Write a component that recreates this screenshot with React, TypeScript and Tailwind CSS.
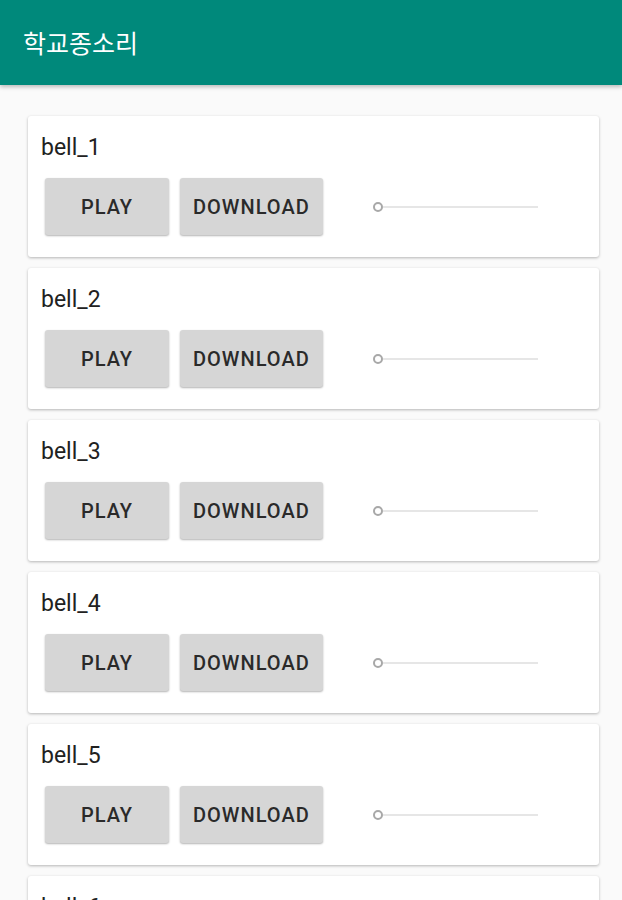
import React from 'react';

const bells = ['bell_1', 'bell_2', 'bell_3', 'bell_4', 'bell_5', 'bell_6'];

const BellCard: React.FC<{ name: string }> = ({ name }) => {
  return (
    <div className="bg-white rounded-[3px] shadow-[0_1px_3px_rgba(0,0,0,0.28)] h-[141px] shrink-0 pl-[13px] pt-[17px]">
      <div className="text-[23px] leading-[30px] text-[#212121]">{name}</div>
      <div className="flex items-center mt-[15px]">
        <button className="w-[124px] h-[57px] bg-[#d6d6d6] rounded-[3px] shadow-[0_1px_2px_rgba(0,0,0,0.3)] ml-[4px] text-[20px] font-medium text-[#2a2a2a] tracking-[1px]">
          PLAY
        </button>
        <button className="h-[57px] px-[13px] bg-[#d6d6d6] rounded-[3px] shadow-[0_1px_2px_rgba(0,0,0,0.3)] ml-[11px] text-[20px] font-medium text-[#2a2a2a] tracking-[1px]">
          DOWNLOAD
        </button>
        <div className="flex items-center ml-[50px]">
          <div className="w-[10px] h-[10px] rounded-full border-2 border-[#a8a8a8]" />
          <div className="w-[155px] h-[2px] bg-[#e6e6e6]" />
        </div>
      </div>
    </div>
  );
};

export default function App() {
  return (
    <div className="w-[622px] h-[900px] overflow-hidden bg-[#fafafa] flex flex-col" style={{ fontFamily: 'Roboto, "Noto Sans CJK KR", sans-serif' }}>
      <div className="h-[85px] bg-[#00897b] shadow-[0_2px_4px_rgba(0,0,0,0.25)] flex items-center pl-[23px] shrink-0 relative z-10">
        <span className="text-white text-[25px] leading-none" style={{ fontFamily: '"Noto Sans CJK KR", sans-serif' }}>학교종소리</span>
      </div>
      <div className="flex flex-col gap-[11px] pl-[28px] pr-[23px] pt-[31px]">
        {bells.map((b) => (
          <BellCard key={b} name={b} />
        ))}
      </div>
    </div>
  );
}
